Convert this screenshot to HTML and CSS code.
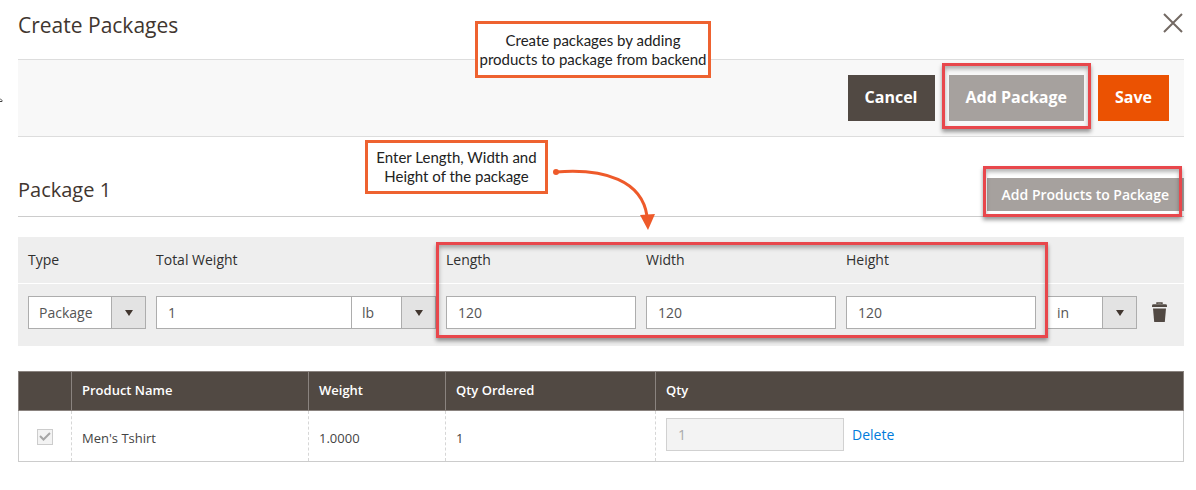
FILE: index.html
```html
<!DOCTYPE html>
<html lang="en">
<head>
    <meta charset="UTF-8">
    <meta name="viewport" content="width=device-width, initial-scale=1.0">
    <title>Create Packages</title>
    <link rel="stylesheet" href="styles.css">
</head>
<body>

    <svg class="edge-mark" width="3" height="4" viewBox="0 0 3 4" aria-hidden="true">
        <path d="M0 0.5L2 2.5V3.5H0" fill="none" stroke="#444"/>
    </svg>

    <!-- Modal header -->
    <header class="modal-header">
        <h1>Create Packages</h1>
        <button class="close-btn" type="button" aria-label="Close">
            <svg width="20" height="20" viewBox="0 0 20 20">
                <path d="M1 1L19 19M19 1L1 19" fill="none" stroke="#736963" stroke-width="2"/>
            </svg>
        </button>
    </header>

    <!-- Toolbar -->
    <div class="toolbar">
        <button class="btn btn-dark" type="button">Cancel</button>
        <div class="marked">
            <button class="btn btn-gray" type="button">Add Package</button>
            <span class="highlight highlight-add"></span>
        </div>
        <button class="btn btn-save" type="button">Save</button>
    </div>

    <!-- Package section -->
    <main>
        <div class="package-title">
            <h2>Package 1</h2>
            <div class="marked">
                <button class="btn btn-gray btn-small" type="button">Add Products to Package</button>
                <span class="highlight highlight-products"></span>
            </div>
        </div>

        <div class="package-options">
            <table class="options-table">
                <colgroup>
                    <col class="col-type">
                    <col class="col-total">
                    <col>
                    <col>
                    <col>
                    <col class="col-unit">
                    <col class="col-remove">
                </colgroup>
                <thead>
                    <tr>
                        <th><label for="type">Type</label></th>
                        <th><label for="total">Total Weight</label></th>
                        <th><label for="length">Length</label></th>
                        <th><label for="width">Width</label></th>
                        <th><label for="height">Height</label></th>
                        <th></th>
                        <th></th>
                    </tr>
                </thead>
                <tbody>
                    <tr>
                        <td>
                            <div class="select">
                                <select id="type"><option>Package</option></select>
                            </div>
                        </td>
                        <td>
                            <div class="weight">
                                <input class="field" id="total" type="text" value="1">
                                <div class="select">
                                    <select aria-label="Weight unit"><option>lb</option><option>kg</option></select>
                                </div>
                            </div>
                        </td>
                        <td><input class="field" id="length" type="text" value="120"></td>
                        <td><input class="field" id="width" type="text" value="120"></td>
                        <td><input class="field" id="height" type="text" value="120"></td>
                        <td>
                            <div class="select">
                                <select aria-label="Size unit"><option>in</option><option>cm</option></select>
                            </div>
                        </td>
                        <td>
                            <button class="remove-btn" type="button" aria-label="Delete Package">
                                <svg width="15" height="20" viewBox="0 0 15 20">
                                    <path d="M5 2V1H10V2" fill="none" stroke="#514943" stroke-width="1.4"/>
                                    <path d="M0 5V3.6Q0 2.2 1.6 2.2H13.4Q15 2.2 15 3.6V5Z" fill="#514943"/>
                                    <path d="M1 6.4H14L12.8 20H2.2Z" fill="#514943"/>
                                </svg>
                            </button>
                        </td>
                    </tr>
                </tbody>
            </table>
            <span class="highlight highlight-size"></span>
        </div>

        <table class="products">
            <colgroup>
                <col class="col-check">
                <col class="col-name">
                <col class="col-weight">
                <col class="col-ordered">
                <col>
            </colgroup>
            <thead>
                <tr>
                    <th></th>
                    <th>Product Name</th>
                    <th>Weight</th>
                    <th>Qty Ordered</th>
                    <th>Qty</th>
                </tr>
            </thead>
            <tbody>
                <tr>
                    <td class="check-cell">
                        <div class="check">
                            <input type="checkbox" aria-label="Men's Tshirt" checked disabled>
                            <svg width="12" height="9" viewBox="0 0 12 9">
                                <path d="M1 4L4.5 7.5L11 1" fill="none" stroke="#a6a6a6" stroke-width="2"/>
                            </svg>
                        </div>
                    </td>
                    <td>Men's Tshirt</td>
                    <td>1.0000</td>
                    <td>1</td>
                    <td class="qty-cell">
                        <div class="qty">
                            <input class="field" type="text" value="1" aria-label="Qty" disabled>
                            <a href="#">Delete</a>
                        </div>
                    </td>
                </tr>
            </tbody>
        </table>
    </main>

    <!-- Notes over the page -->
    <div class="note note-create">Create packages by adding<br>products to package from backend</div>
    <div class="note note-size">Enter Length, Width and<br>Height of the package</div>
    <svg class="arrow" width="106" height="64" viewBox="0 0 106 64" aria-hidden="true">
        <circle cx="6" cy="5" r="3" fill="#ee5a2a"/>
        <path d="M6 5C55 1 92 14 97 49" fill="none" stroke="#ee5a2a" stroke-width="3"/>
        <path d="M90 48L105 47L98 63Z" fill="#ee5a2a"/>
    </svg>

</body>
</html>
```

FILE: styles.css
```css
* {
    box-sizing: border-box;
}
body {
    margin: 0;
    padding: 0 12px 0 18px;
    position: relative;
    font-family: "Open Sans", "Noto Sans", sans-serif;
    font-size: 14px;
    color: #303030;
    background-color: #fff;
}
h1, h2 {
    margin: 0;
    font-weight: 400;
    color: #41362f;
}
h1 {
    font-size: 21px;
    line-height: 30px;
}
h2 {
    font-size: 20px;
    line-height: 26px;
}
button, input, select {
    font-family: inherit;
    font-size: 14px;
    margin: 0;
}
button {
    cursor: pointer;
}
.edge-mark {
    position: absolute;
    left: 0;
    top: 98px;
}

/* header and toolbar */
.modal-header {
    display: flex;
    justify-content: space-between;
    align-items: flex-start;
    height: 59px;
    padding-top: 10px;
}
.close-btn, .remove-btn {
    display: block;
    padding: 0;
    border: none;
    background: none;
}
.close-btn svg, .remove-btn svg {
    display: block;
}
.close-btn {
    padding: 3px 1px;
}
.toolbar {
    display: flex;
    justify-content: flex-end;
    gap: 14px;
    padding: 15px;
    background-color: #f8f8f8;
    border-top: 1px solid #ddd;
    border-bottom: 1px solid #ddd;
}
.btn {
    display: block;
    height: 46px;
    padding: 0 17px 2px;
    border: none;
    color: #fff;
    font-size: 16px;
    font-weight: 700;
    white-space: nowrap;
}
.btn-small {
    height: 33px;
    padding: 0 15px;
    font-size: 14px;
    font-weight: 600;
}
.btn-dark {
    background-color: #514943;
}
.btn-gray {
    background-color: #a6a19e;
}
.btn-save {
    background-color: #eb5202;
}

/* red frames */
.marked {
    position: relative;
}
.highlight {
    position: absolute;
    border: 3px solid #e8474c;
    box-shadow: 0 3px 4px rgba(0, 0, 0, 0.4), inset 0 3px 4px rgba(0, 0, 0, 0.3);
    pointer-events: none;
}
.highlight-add {
    inset: -12px -7px -8px;
}
.highlight-products {
    inset: -12px 2px -6px -4px;
}
.highlight-size {
    inset: 5px 136px 8px 418px;
}

/* package section */
.package-title {
    display: flex;
    justify-content: space-between;
    align-items: flex-end;
    height: 80px;
    padding-bottom: 5px;
    border-bottom: 1px solid #ccc;
}
.package-title h2 {
    padding-bottom: 8px;
}
.package-options {
    position: relative;
    margin: 20px 0 25px;
    background-color: #eee;
}
.options-table, .products {
    width: 100%;
    table-layout: fixed;
    border-collapse: collapse;
}
.col-type {
    width: 128px;
}
.col-total {
    width: 290px;
}
.col-unit {
    width: 101px;
}
.col-remove {
    width: 47px;
}
.options-table th {
    height: 46px;
    padding: 0 0 0 10px;
    text-align: left;
    font-weight: 400;
    border-bottom: 1px solid #fff;
}
.options-table td {
    padding: 12px 0 17px 10px;
}
.options-table td:last-child {
    padding-left: 15px;
}
.field {
    display: block;
    width: 100%;
    height: 33px;
    padding: 0 11px;
    border: 1px solid #adadad;
    border-radius: 0;
    background-color: #fff;
    color: #555;
}
.weight {
    display: flex;
}
.weight .field {
    flex: 1;
    min-width: 0;
}
.weight .select {
    width: 85px;
    margin-left: -1px;
}
.select {
    position: relative;
}
.select select {
    display: block;
    width: 100%;
    height: 33px;
    padding: 0 36px 0 10px;
    border: 1px solid #adadad;
    border-radius: 0;
    background-color: #fff;
    color: #555;
    appearance: none;
}
.select::before {
    content: "";
    position: absolute;
    top: 1px;
    right: 1px;
    bottom: 1px;
    width: 33px;
    border-left: 1px solid #adadad;
    background-color: #e3e3e3;
    pointer-events: none;
}
.select::after {
    content: "";
    position: absolute;
    top: 14px;
    right: 13px;
    border: 4px solid transparent;
    border-top: 6px solid #41362f;
    border-bottom: none;
    pointer-events: none;
}

/* products */
.col-check {
    width: 53px;
}
.col-name {
    width: 237px;
}
.col-weight {
    width: 137px;
}
.col-ordered {
    width: 210px;
}
.products {
    font-size: 13px;
    border: 1px solid #ccc;
}
.products th {
    height: 39px;
    padding: 0 10px 2px;
    text-align: left;
    font-weight: 600;
    color: #fff;
    background-color: #514943;
    border: 1px solid #8a837f;
}
.products td {
    height: 51px;
    padding: 4px 10px 0;
    color: #444;
    border-left: 1px dashed #d6d6d6;
}
.products td:first-child {
    border-left: 1px solid #ccc;
}
.products .check-cell {
    padding: 2px 0 0;
}
.check {
    display: grid;
    width: 16px;
    margin: 0 auto;
    place-items: center;
}
.check input, .check svg {
    grid-area: 1 / 1;
}
.check input {
    width: 16px;
    height: 16px;
    appearance: none;
    border: 1px solid #ccc;
    background-color: #f3f3f3;
}
.check svg {
    position: relative;
}
.products .qty-cell {
    padding: 0 10px 3px;
}
.qty {
    display: flex;
    align-items: center;
    gap: 8px;
}
.qty .field {
    width: 178px;
    border-color: #d1d1d1;
    background-color: #f3f3f3;
    color: #aaa;
}
.qty a {
    font-size: 14px;
    color: #007bdb;
    text-decoration: none;
}

/* notes */
.note {
    position: absolute;
    display: flex;
    align-items: center;
    justify-content: center;
    border: 3px solid #ee6230;
    background-color: #fff;
    font-family: Lato, "Noto Sans", sans-serif;
    font-size: 15px;
    line-height: 19px;
    color: #222;
    text-align: center;
    white-space: nowrap;
}
.note-create {
    left: 475px;
    top: 21px;
    width: 236px;
    height: 57px;
}
.note-size {
    left: 365px;
    top: 140px;
    width: 183px;
    height: 54px;
}
.arrow {
    position: absolute;
    left: 550px;
    top: 167px;
}
```
